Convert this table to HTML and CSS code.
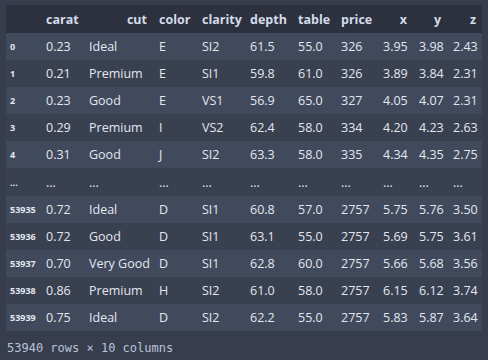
FILE: index.html
```html
<!DOCTYPE html>
<html>
<head>
<meta charset="utf-8">
<link rel="stylesheet" href="styles.css">
</head>
<body>
<table class="df">
  <colgroup>
    <col class="c-idx"><col class="c-carat"><col class="c-cut"><col class="c-color"><col class="c-clarity"><col class="c-depth"><col class="c-table"><col class="c-price"><col class="c-x"><col class="c-y"><col class="c-z">
  </colgroup>
  <thead>
    <tr><th></th><th>carat</th><th class="r">cut</th><th>color</th><th>clarity</th><th>depth</th><th>table</th><th>price</th><th class="r">x</th><th class="r">y</th><th class="r">z</th></tr>
  </thead>
  <tbody>
    <tr><th>0</th><td>0.23</td><td>Ideal</td><td>E</td><td>SI2</td><td>61.5</td><td>55.0</td><td>326</td><td class="r">3.95</td><td class="r">3.98</td><td class="r">2.43</td></tr>
    <tr><th>1</th><td>0.21</td><td>Premium</td><td>E</td><td>SI1</td><td>59.8</td><td>61.0</td><td>326</td><td class="r">3.89</td><td class="r">3.84</td><td class="r">2.31</td></tr>
    <tr><th>2</th><td>0.23</td><td>Good</td><td>E</td><td>VS1</td><td>56.9</td><td>65.0</td><td>327</td><td class="r">4.05</td><td class="r">4.07</td><td class="r">2.31</td></tr>
    <tr><th>3</th><td>0.29</td><td>Premium</td><td>I</td><td>VS2</td><td>62.4</td><td>58.0</td><td>334</td><td class="r">4.20</td><td class="r">4.23</td><td class="r">2.63</td></tr>
    <tr><th>4</th><td>0.31</td><td>Good</td><td>J</td><td>SI2</td><td>63.3</td><td>58.0</td><td>335</td><td class="r">4.34</td><td class="r">4.35</td><td class="r">2.75</td></tr>
    <tr><th>...</th><td>...</td><td>...</td><td>...</td><td>...</td><td>...</td><td>...</td><td>...</td><td>...</td><td>...</td><td>...</td></tr>
    <tr><th>53935</th><td>0.72</td><td>Ideal</td><td>D</td><td>SI1</td><td>60.8</td><td>57.0</td><td>2757</td><td class="r">5.75</td><td class="r">5.76</td><td class="r">3.50</td></tr>
    <tr><th>53936</th><td>0.72</td><td>Good</td><td>D</td><td>SI1</td><td>63.1</td><td>55.0</td><td>2757</td><td class="r">5.69</td><td class="r">5.75</td><td class="r">3.61</td></tr>
    <tr><th>53937</th><td>0.70</td><td>Very Good</td><td>D</td><td>SI1</td><td>62.8</td><td>60.0</td><td>2757</td><td class="r">5.66</td><td class="r">5.68</td><td class="r">3.56</td></tr>
    <tr><th>53938</th><td>0.86</td><td>Premium</td><td>H</td><td>SI2</td><td>61.0</td><td>58.0</td><td>2757</td><td class="r">6.15</td><td class="r">6.12</td><td class="r">3.74</td></tr>
    <tr><th>53939</th><td>0.75</td><td>Ideal</td><td>D</td><td>SI2</td><td>62.2</td><td>55.0</td><td>2757</td><td class="r">5.83</td><td class="r">5.87</td><td class="r">3.64</td></tr>
  </tbody>
</table>
<p class="shape">53940 rows × 10 columns</p>
</body>
</html>
```

FILE: styles.css
```css
html, body {
  background: #373d4d;
}
body {
  margin: 5px 6px;
  font-family: "Open Sans", "Noto Sans", sans-serif;
  font-size: 12.5px;
  color: #e3e7f0;
}
.df {
  border-collapse: collapse;
  table-layout: fixed;
  width: 476px;
}
.c-idx { width: 34px; }
.c-carat { width: 43px; }
.c-cut { width: 70px; }
.c-color { width: 43px; }
.c-clarity { width: 48px; }
.c-depth { width: 48px; }
.c-table { width: 43px; }
.c-price { width: 42px; }
.c-x { width: 36px; }
.c-y { width: 34px; }
.c-z { width: 35px; }

.df th, .df td {
  padding: 0 6px;
  text-align: left;
  white-space: nowrap;
  overflow: hidden;
}
.df thead tr {
  height: 28px;
  background: #2c313d;
}
.df thead th {
  font-weight: 700;
  color: #d4daeb;
}
.df tbody tr {
  height: 27.1px;
  background: #394050;
}
.df tbody tr:nth-child(odd) {
  background: #414a5c;
}
.df tbody th {
  font-size: 9px;
  font-weight: 700;
  padding-left: 4px;
  color: #e3e7f0;
}
.df .r {
  text-align: right;
}
.shape {
  margin: 10px 0 0 1px;
  font-family: "DejaVu Sans Mono", monospace;
  font-size: 12px;
  color: #b9c3da;
}
```
